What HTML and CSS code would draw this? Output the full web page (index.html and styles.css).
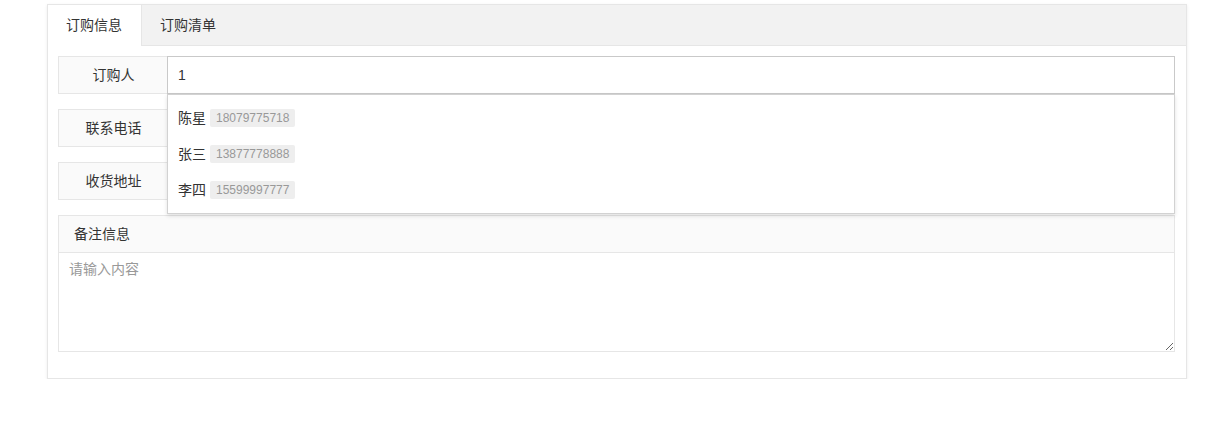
FILE: index.html
```html
<!DOCTYPE html>
<html lang="zh-CN">
<head>
<meta charset="utf-8">
<title>订购</title>
<link rel="stylesheet" href="styles.css">
</head>
<body>
<div class="card">
  <ul class="tab-title">
    <li class="tab active">订购信息</li>
    <li class="tab">订购清单</li>
  </ul>
  <div class="tab-content">
    <div class="form-item">
      <label class="form-label">订购人</label>
      <div class="input-block">
        <input class="input focus" type="text" value="1">
        <dl class="dropdown">
          <dd class="option"><span class="name">陈星</span><span class="tag">18079775718</span></dd>
          <dd class="option"><span class="name">张三</span><span class="tag">13877778888</span></dd>
          <dd class="option"><span class="name">李四</span><span class="tag">15599997777</span></dd>
        </dl>
      </div>
    </div>
    <div class="form-item">
      <label class="form-label">联系电话</label>
      <div class="input-block"><input class="input" type="text"></div>
    </div>
    <div class="form-item">
      <label class="form-label">收货地址</label>
      <div class="input-block"><input class="input" type="text"></div>
    </div>
    <div class="form-item form-text">
      <label class="text-label">备注信息</label>
      <textarea class="textarea" placeholder="请输入内容"></textarea>
    </div>
  </div>
</div>
</body>
</html>
```
FILE: styles.css
```css
* { box-sizing: border-box; }
html, body { margin: 0; padding: 0; background: #fff; }
body {
  font-family: "Liberation Sans", "Noto Sans CJK SC", sans-serif;
  font-size: 14px;
  color: #333;
  padding: 4px 30px 0 47px;
}
.card {
  width: 1140px;
  border: 1px solid #e6e6e6;
  box-shadow: 0 1px 3px rgba(0,0,0,0.08);
  background: #fff;
}
.tab-title {
  list-style: none;
  margin: 0;
  padding: 0;
  height: 41px;
  display: flex;
  background: #f2f2f2;
  border-bottom: 1px solid #e6e6e6;
}
.tab {
  height: 40px;
  line-height: 40px;
  padding: 0 19px 0 18px;
  color: #333;
  font-size: 14px;
}
.tab.active {
  background: #fff;
  border-right: 1px solid #e6e6e6;
  height: 41px;
}
.tab-content {
  padding: 10px 11px 11px 10px;
}
.form-item {
  display: flex;
  margin-bottom: 15px;
}
.form-label {
  width: 109px;
  height: 38px;
  line-height: 36px;
  padding-left: 1px;
  text-align: center;
  background: #fafafa;
  border: 1px solid #e6e6e6;
  border-right: 0;
  color: #333;
  flex: none;
}
.input-block {
  flex: 1;
  position: relative;
}
.input {
  display: block;
  width: 100%;
  height: 38px;
  border: 1px solid #e6e6e6;
  padding: 0 10px;
  font: inherit;
  font-size: 14px;
  color: #333;
  outline: none;
  background: #fff;
}
.input.focus { border-color: #c9c9c9; }
.dropdown {
  position: absolute;
  left: 0;
  right: 0;
  top: 38px;
  margin: 0;
  padding: 5px 0;
  background: #fff;
  border: 1px solid #d2d2d2;
  box-shadow: 0 2px 4px rgba(0,0,0,0.12);
  z-index: 10;
}
.option {
  margin: 0;
  height: 36px;
  line-height: 36px;
  padding: 0 10px;
  display: flex;
  align-items: center;
  color: #333;
}
.name { font-size: 14px; }
.tag {
  margin-left: 4px;
  background: #eee;
  color: #999;
  font-size: 12px;
  height: 18px;
  line-height: 18px;
  padding: 0 6px;
  border-radius: 2px;
}
.form-text {
  flex-direction: column;
  margin-bottom: 15px;
}
.text-label {
  height: 37px;
  line-height: 36px;
  padding-left: 15px;
  background: #fafafa;
  border: 1px solid #e6e6e6;
  border-bottom: 0;
  color: #333;
}
.textarea {
  display: block;
  width: 100%;
  height: 100px;
  border: 1px solid #e6e6e6;
  padding: 6px 10px;
  font: inherit;
  font-size: 14px;
  line-height: 20px;
  color: #333;
  resize: vertical;
  outline: none;
}
.textarea::placeholder { color: #999; }
```
